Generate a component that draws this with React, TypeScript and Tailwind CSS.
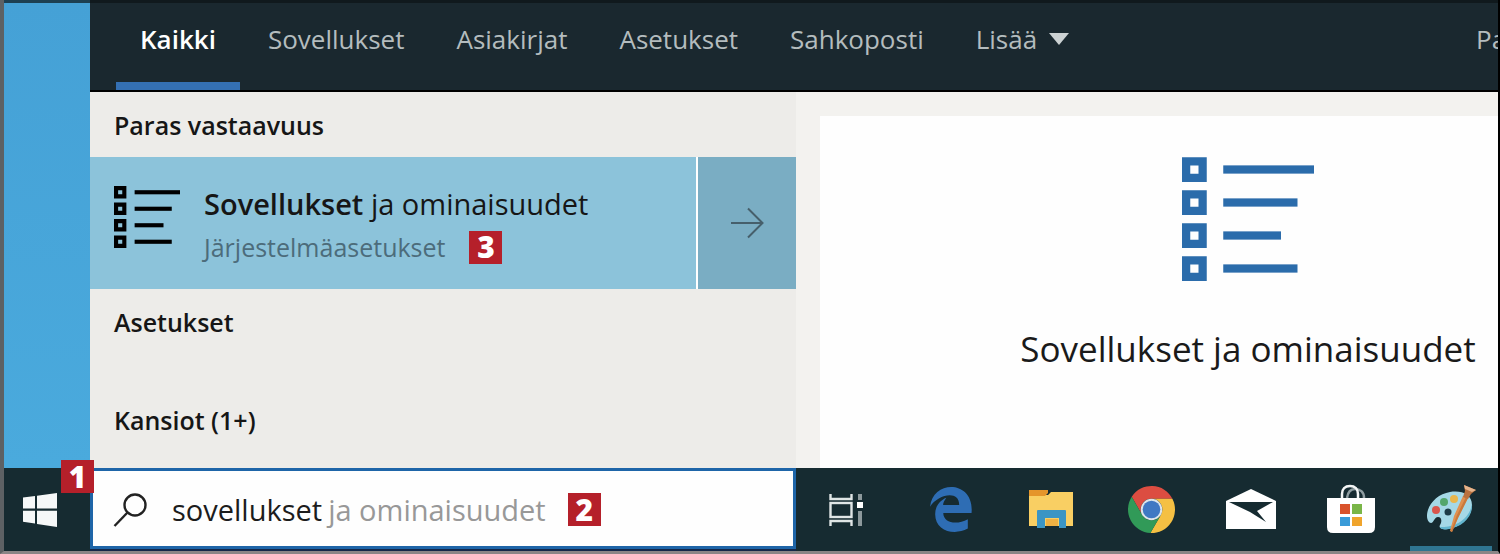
import type { ReactNode } from "react";
import clsx from "clsx";

const TABS = ["Kaikki", "Sovellukset", "Asiakirjat", "Asetukset", "Sahkoposti"];

function ListIcon({ className }: { className?: string }) {
  return (
    <svg viewBox="0 0 16 15" fill="currentColor" className={className} aria-hidden="true">
      {[11, 9, 7, 9].map((width, i) => (
        <g key={i}>
          <path fillRule="evenodd" d={`M0 ${i * 4}h3v3h-3zM1 ${i * 4 + 1}v1h1v-1z`} />
          <rect x="5" y={i * 4 + 1} width={width} height="1" />
        </g>
      ))}
    </svg>
  );
}

function WindowsIcon() {
  return (
    <svg viewBox="0 0 36 36" className="size-9" fill="#f6f8f8" aria-hidden="true">
      <path d="M1 5.6 13 4v12.6H1zM15 3.7 35 1v15.6H15zM1 18.8h12v12.6L1 29.8zM15 18.8h20V35l-20-3z" />
    </svg>
  );
}

function SearchIcon() {
  return (
    <svg viewBox="0 0 36 36" className="size-9 shrink-0" fill="none" stroke="#222" strokeWidth="2.4" aria-hidden="true">
      <circle cx="22" cy="13" r="10.5" />
      <path d="M14.5 20.5 1.5 34" />
    </svg>
  );
}

function ArrowIcon() {
  return (
    <svg viewBox="0 0 34 32" className="h-8 w-[34px]" fill="none" stroke="#465f6b" strokeWidth="2" aria-hidden="true">
      <path d="M1 16h31M18 1.5 32.5 16 18 30.5" />
    </svg>
  );
}

function TaskViewIcon() {
  return (
    <svg viewBox="0 0 34 34" className="size-[34px]" fill="none" stroke="#dfe5e5" strokeWidth="2.4" aria-hidden="true">
      <path d="M1.5 1v5h21V1M1.5 33v-5h21V33" />
      <rect x="1.5" y="10" width="21" height="14" />
      <path d="M31 1v6M31 18v15" stroke="#8d999c" strokeWidth="4" />
      <rect x="28" y="9" width="6" height="6" fill="#fff" stroke="none" />
    </svg>
  );
}

function EdgeIcon() {
  return (
    <svg viewBox="2.7 1.6 18.7 20.4" className="h-[46px] w-[42px]" fill="#2e6db4" aria-hidden="true">
      <path d="M2.74 10.81C3.83-1.36 22.5-1.36 21.2 13.56H8.61c0 4.29 5.81 5.65 10.93 2.75v4.22C13.25 23.88 5 21.43 5 14.09c0-5.51 4.97-7.28 4.97-7.28S8.58 8.58 8.54 10.05h7.16c0-7.12-9.8-4.48-12.96.76z" />
    </svg>
  );
}

function FolderIcon() {
  return (
    <svg viewBox="0 0 46 40" className="h-10 w-[46px]" aria-hidden="true">
      <path fill="#f9cf63" d="M1 6h19l3-3h22v34H1z" />
      <path fill="#e5952b" d="M1 1h19v3l-3 3H1z" />
      <path fill="#3b95c4" d="M9 22q0-1 1-1h27q1 0 1 1v17h-7v-9H17v9H9z" />
      <path fill="#f9cf63" d="M17 29h14v8H17z" />
      <path fill="#efb143" d="M18 30h12v7H18z" />
    </svg>
  );
}

function ChromeIcon() {
  return (
    <svg viewBox="0 0 48 48" className="size-[47px]" aria-hidden="true">
      <path fill="#dc4d41" d="M24 13H45.33A24 24 0 0 0 3.81 11.03L14.47 29.5A11 11 0 0 1 24 13z" />
      <path fill="#f5c043" d="M24 13H45.33A24 24 0 0 1 22.86 47.97L33.53 29.5A11 11 0 0 0 24 13z" />
      <path fill="#319a58" d="M3.81 11.03A24 24 0 0 0 22.86 47.97L33.53 29.5A11 11 0 0 1 14.47 29.5z" />
      <circle cx="24" cy="24" r="11" fill="#dde5ea" />
      <circle cx="24" cy="24" r="9" fill="#3f78c3" />
    </svg>
  );
}

function MailIcon() {
  return (
    <svg viewBox="0 0 50 42" className="h-[42px] w-[50px]" aria-hidden="true">
      <path fill="#fff" d="M0 13 25 1l25 12v28H0z" />
      <path fill="#162b31" d="M3 14h44l-16 9 9 11-16-10z" />
    </svg>
  );
}

function StoreIcon() {
  return (
    <svg viewBox="0 0 48 50" className="h-[50px] w-12" aria-hidden="true">
      <path fill="none" stroke="#8f9da1" strokeWidth="2.5" d="M20 14c1-7 4-9 8-9 5 0 9 3 9 9" />
      <path fill="none" stroke="#f4f6f6" strokeWidth="2.5" d="M15 15V10c0-5 3-8 8-8s8 3 8 8v5" />
      <path fill="#fff" d="M0 14h48v29q0 6-6 6H6q-6 0-6-6z" />
      <path fill="#d9532b" d="M13 20h10v10H13z" />
      <path fill="#7ab648" d="M25 20h10v10H25z" />
      <path fill="#3a9bd8" d="M13 33h10v9H13z" />
      <path fill="#f0a42c" d="M25 33h10v9H25z" />
    </svg>
  );
}

function PaintIcon() {
  return (
    <svg viewBox="0 0 50 50" className="size-[50px]" aria-hidden="true">
      <path
        fill="#a5d8e6"
        d="M24 8C11 10 1 21 1 32c0 4 2 7 4 7 3 0 3-6 7-6s4 5 2 8 3 5 8 4c13-2 24-12 24-24C46 10 35 6 24 8z"
      />
      <path fill="#63b6cf" d="M46 20c1 14-11 23-23 25-5 1-9 0-9-2 11 1 29-5 32-23z" />
      <circle cx="10" cy="26" r="4" fill="#d9564c" />
      <circle cx="18" cy="18" r="4" fill="#53a66c" />
      <circle cx="28" cy="15" r="4" fill="#e9b64b" />
      <circle cx="22" cy="28" r="3.5" fill="#1d3b47" />
      <path fill="#e0904f" d="m37 12 5 2-10 20-6 14-2-1 4-15z" />
      <path fill="#c9793c" d="m42 14-10 20-6 14-1-1 6-16 9-18z" />
      <path fill="#b9713f" d="m38 1 12 5-5 4-3 5-5-2 2-6z" />
      <path fill="#e6b48c" d="m38 1 12 5-4 2-7-3z" />
    </svg>
  );
}

function Marker({ children, className }: { children: ReactNode; className?: string }) {
  return (
    <span
      className={clsx(
        "flex size-[33px] shrink-0 items-center justify-center bg-[#b5202a] text-[30px] leading-none font-extrabold text-white",
        className,
      )}
    >
      {children}
    </span>
  );
}

const APPS = [
  { name: "Edge", icon: <EdgeIcon /> },
  { name: "Resurssienhallinta", icon: <FolderIcon /> },
  { name: "Chrome", icon: <ChromeIcon /> },
  { name: "Sähköposti", icon: <MailIcon /> },
  { name: "Store", icon: <StoreIcon /> },
  { name: "Paint", icon: <PaintIcon />, active: true },
];

function TabBar() {
  return (
    <nav className="flex h-[92px] justify-between overflow-hidden border-t-[3px] border-b-2 border-t-[#10191d] border-b-black bg-[#1a282f] pl-[26px] text-[26px] leading-[34px] whitespace-nowrap text-[#b4bcbe]">
      <div className="flex gap-1">
        {TABS.map((tab, i) => (
          <button
            key={tab}
            type="button"
            className={clsx(
              "border-b-8 px-6 pb-2",
              i === 0 ? "border-[#3470b3] font-semibold text-white" : "border-transparent",
            )}
          >
            {tab}
          </button>
        ))}
        <button type="button" className="flex items-center gap-3 border-b-8 border-transparent px-6 pb-2">
          Lisää
          <svg viewBox="0 0 20 12" className="h-3 w-5" fill="#ccd2d3" aria-hidden="true">
            <path d="M0 0h20L10 12z" />
          </svg>
        </button>
      </div>
      <button type="button" className="w-[22px] shrink-0 border-b-8 border-transparent pb-2 text-left">
        Pa
      </button>
    </nav>
  );
}

function Results() {
  return (
    <section className="w-[706px] shrink-0 bg-[#edece9] text-[25px] leading-[34px] text-[#161616]">
      <h2 className="px-6 pt-4 pb-[15px] font-semibold">Paras vastaavuus</h2>
      <div className="flex h-[132px] gap-0.5 bg-white">
        <button type="button" className="flex flex-1 items-center gap-6 bg-[#8cc3da] pl-6 text-left">
          <ListIcon className="mb-3 h-[62px] w-[66px] text-black" />
          <span className="flex flex-col gap-1.5 pt-0.5">
            <span className="text-[29px] leading-10">
              <span className="font-semibold">Sovellukset</span> ja ominaisuudet
            </span>
            <span className="flex items-center gap-6 text-[#4c6c7b]">
              Järjestelmäasetukset
              <Marker>3</Marker>
            </span>
          </span>
        </button>
        <button type="button" aria-label="Avaa" className="flex w-[98px] items-center justify-center bg-[#7aadc3]">
          <ArrowIcon />
        </button>
      </div>
      <div className="flex flex-col gap-16 px-6 pt-4 font-semibold">
        <h2>Asetukset</h2>
        <h2>Kansiot (1+)</h2>
      </div>
    </section>
  );
}

function Preview() {
  return (
    <section className="min-w-0 flex-1 overflow-hidden bg-[#f3f2ef] pt-6 pl-6">
      <div className="flex h-full min-w-[856px] flex-col items-center bg-[#fefefe] pt-[41px]">
        <ListIcon className="h-[124px] w-[132px] text-[#2b6cab]" />
        <h1 className="mt-11 text-[35px] leading-12 text-[#1a1a1a]">Sovellukset ja ominaisuudet</h1>
      </div>
    </section>
  );
}

function Taskbar() {
  return (
    <footer className="flex h-[83px] overflow-hidden bg-[#162b31]">
      <div className="flex w-[86px] shrink-0">
        <button type="button" aria-label="Käynnistä" className="flex w-[72px] items-center justify-center">
          <WindowsIcon />
        </button>
      </div>
      <div className="w-[706px] shrink-0 bg-[#14284a] pb-0.5">
        <label className="flex h-full items-center border-[3px] border-[#1e65a8] bg-[#fefefe] pt-0.5 pl-5 text-[29px] leading-10">
          <SearchIcon />
          <input
            type="text"
            defaultValue="sovellukset"
            aria-label="Haku"
            className="ml-[23px] field-sizing-content p-0 text-[#1c1c1c] outline-none"
          />
          <span className="ml-1.5 whitespace-nowrap text-[#989898]">ja ominaisuudet</span>
          <Marker className="ml-[22px]">2</Marker>
        </label>
      </div>
      <button type="button" aria-label="Tehtävänäkymä" className="mr-[5px] flex w-[100px] shrink-0 items-center justify-center">
        <TaskViewIcon />
      </button>
      {APPS.map((app) => (
        <button
          key={app.name}
          type="button"
          aria-label={app.name}
          className="flex w-[100px] shrink-0 flex-col items-center"
        >
          <span className="flex flex-1 items-center pt-1">{app.icon}</span>
          <span className={clsx("h-[5px] w-[82px]", app.active && "bg-[#2f7591]")} />
        </button>
      ))}
    </footer>
  );
}

export default function App() {
  return (
    <div className="flex min-h-screen flex-col overflow-hidden border-r-2 border-b-[3px] border-l-4 border-r-black border-b-[#8b8586] border-l-[#5d6164] font-['Open_Sans','Noto_Sans',sans-serif]">
      <div className="relative flex flex-1 flex-col">
        <div className="flex flex-1">
          <div className="w-[86px] shrink-0 border-t-[3px] border-[#1d4052] bg-linear-to-b from-[#45a1d6] to-[#4aaadd]" />
          <main className="flex min-w-0 flex-1 flex-col">
            <TabBar />
            <div className="flex flex-1">
              <Results />
              <Preview />
            </div>
          </main>
        </div>
        <Taskbar />
        <Marker className="absolute bottom-[58px] left-[57px]">1</Marker>
      </div>
    </div>
  );
}
